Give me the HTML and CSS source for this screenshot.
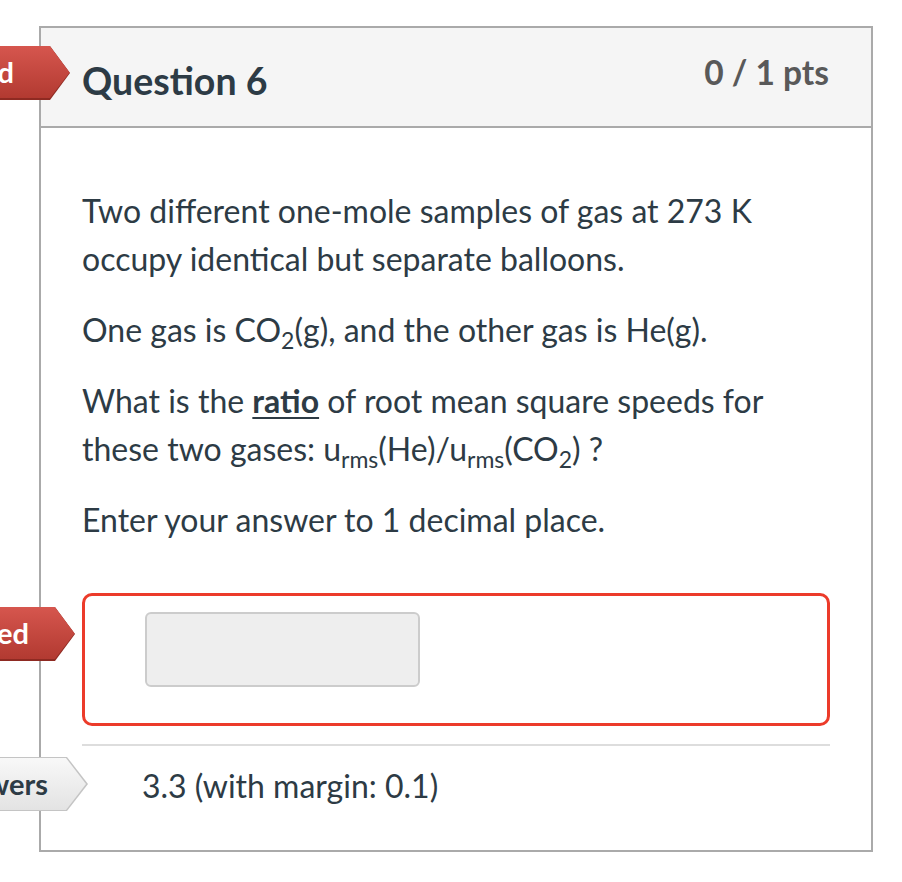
FILE: index.html
```html
<!DOCTYPE html>
<html>
<head>
<meta charset="utf-8">
<link rel="stylesheet" href="styles.css">
</head>
<body>
<div class="page">
  <div class="badge badge-red badge-q"><div class="badge-fill"><span>Unanswered</span></div></div>
  <div class="badge badge-red badge-you"><div class="badge-fill"><span>You Answered</span></div></div>
  <div class="badge badge-grey badge-correct"><div class="badge-fill"><span>Correct Answers</span></div></div>
  <div class="card">
    <div class="card-header">
      <div class="title">Question 6</div>
      <div class="points">0 / 1 pts</div>
    </div>
    <div class="card-body">
      <p>Two different one-mole samples of gas at 273 K occupy identical but separate balloons.</p>
      <p>One gas is CO<sub>2</sub>(g), and the other gas is He(g).</p>
      <p>What is the <b class="u">ratio</b> of root mean square speeds for these two gases: u<sub>rms</sub>(He)/u<sub>rms</sub>(CO<sub>2</sub>) ?</p>
      <p>Enter your answer to 1 decimal place.</p>
      <div class="answer-box">
        <div class="answer-input"></div>
      </div>
      <div class="separator"></div>
      <div class="correct">3.3 (with margin: 0.1)</div>
    </div>
  </div>
</div>
</body>
</html>
```
FILE: styles.css
```css
html, body {
  margin: 0;
  padding: 0;
  background: #ffffff;
}
body {
  font-family: Lato, "Open Sans", sans-serif;
  color: #2d3b45;
}
.page {
  position: relative;
  padding: 26px 0 0 39px;
}
.card {
  width: 834px;
  box-sizing: border-box;
  border: 2px solid #aaaaaa;
  background: #fff;
}
.card-header {
  height: 98px;
  background: #f5f5f5;
  border-bottom: 2px solid #aaaaaa;
  display: flex;
  justify-content: space-between;
  align-items: flex-start;
  padding: 0 42px 0 41px;
}
.title {
  padding-top: 30px;
  font-size: 37.5px;
  line-height: 45px;
  font-weight: 700;
  color: #2d3b45;
}
.points {
  padding-top: 24px;
  font-size: 33.5px;
  line-height: 40px;
  font-weight: 700;
  color: #595959;
}
.card-body {
  padding: 59px 41px 40px 41px;
}
.card-body p {
  margin: 0 0 23px 0;
  font-size: 32px;
  line-height: 48px;
}
sub {
  font-size: 23px;
  line-height: 0;
  vertical-align: -7px;
}
.u {
  font-weight: 700;
  text-decoration: underline;
  text-decoration-thickness: 2px;
  text-underline-offset: 4px;
}
.answer-box {
  margin-top: 49px;
  border: 3px solid #ec3b2a;
  border-radius: 10px;
  padding: 16px 60px 36px;
}
.answer-input {
  width: 275px;
  height: 75px;
  box-sizing: border-box;
  background: #eeeeee;
  border: 2px solid #cccccc;
  border-radius: 6px;
}
.separator {
  margin-top: 18px;
  border-top: 2px solid #dddddd;
}
.correct {
  margin-top: 16px;
  padding-left: 60px;
  font-size: 32px;
  line-height: 48px;
}
.badge {
  position: absolute;
  left: 0;
  height: 54px;
}
.badge-fill {
  position: absolute;
  inset: 0;
  display: flex;
  justify-content: flex-end;
  align-items: center;
  white-space: nowrap;
  font-size: 29px;
  line-height: 54px;
  font-weight: 700;
}
.badge-red {
  background: #8e2a22;
}
.badge-red .badge-fill {
  bottom: 2px;
  background: linear-gradient(#d6564e, #b23a31);
  color: #ffffff;
}
.badge-grey {
  background: #c4c4c4;
}
.badge-grey .badge-fill {
  top: 1px;
  bottom: 1px;
  right: 1px;
  background: linear-gradient(#f8f8f8, #e3e3e3);
  color: #2d3b45;
}
.badge-q {
  top: 46px;
  width: 70px;
  clip-path: polygon(0 0, 50px 0, 70px 50%, 50px 100%, 0 100%);
}
.badge-q .badge-fill {
  clip-path: polygon(0 0, 50px 0, 70px 50%, 50px 100%, 0 100%);
  padding-right: 56px;
}
.badge-you {
  top: 607px;
  width: 75px;
  clip-path: polygon(0 0, 55px 0, 75px 50%, 55px 100%, 0 100%);
}
.badge-you .badge-fill {
  clip-path: polygon(0 0, 55px 0, 75px 50%, 55px 100%, 0 100%);
  padding-right: 46px;
}
.badge-correct {
  top: 757px;
  width: 88px;
  clip-path: polygon(0 0, 67px 0, 88px 50%, 67px 100%, 0 100%);
}
.badge-correct .badge-fill {
  clip-path: polygon(0 0, 66px 0, 86px 50%, 66px 100%, 0 100%);
  padding-right: 39px;
}
```
